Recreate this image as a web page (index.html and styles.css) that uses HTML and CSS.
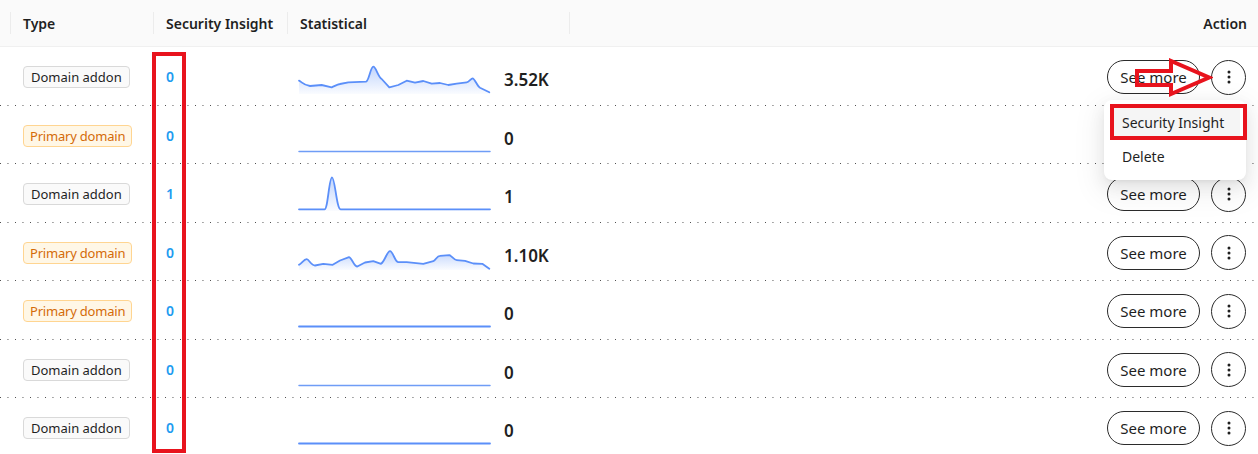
FILE: index.html
```html
<!DOCTYPE html>
<html lang="en">
<head>
<meta charset="utf-8">
<title>Domains</title>
<link rel="stylesheet" href="styles.css">
</head>
<body>
<svg class="defs" width="0" height="0" aria-hidden="true">
  <defs>
    <linearGradient id="sparkFill" x1="0" y1="0" x2="0" y2="1">
      <stop offset="0" stop-color="#5b8ff9" stop-opacity="0.38"/>
      <stop offset="1" stop-color="#5b8ff9" stop-opacity="0.03"/>
    </linearGradient>
  </defs>
</svg>
<div class="table">
  <div class="thead">
    <div class="th sep"></div>
    <div class="th sep">Type</div>
    <div class="th sep">Security Insight</div>
    <div class="th sep">Statistical</div>
    <div class="th"></div>
    <div class="th th-action">Action</div>
  </div>

  <!-- row 1 -->
  <div class="row">
    <div class="cell"></div>
    <div class="cell"><span class="tag tag-addon">Domain addon</span></div>
    <div class="cell"><span class="count">0</span></div>
    <div class="cell stat">
      <svg class="spark" width="191" height="36" viewBox="0 0 191 36">
        <path class="area" d="M0 22.7 C3 24 4 27 11 28 L22.7 27 L32.7 29.3 C36 28 38 26.5 41 26 L49.3 24.3 L67 23.7 C70 23 71.5 8.7 74.3 8.7 C77 8.7 79 19 82.7 21 L90.3 29.3 L99.3 27 L107.7 22.7 L116 24.7 L124.3 23 L132.7 25.7 L141 25 L149.3 27 L157.7 25.7 L167.7 24.3 C170 24 172 20.3 173.7 20.3 C176 21 178 28 181 29.7 L190.3 34.3 L190.3 36 L0 36 Z"/>
        <path class="line" d="M0 22.7 C3 24 4 27 11 28 L22.7 27 L32.7 29.3 C36 28 38 26.5 41 26 L49.3 24.3 L67 23.7 C70 23 71.5 8.7 74.3 8.7 C77 8.7 79 19 82.7 21 L90.3 29.3 L99.3 27 L107.7 22.7 L116 24.7 L124.3 23 L132.7 25.7 L141 25 L149.3 27 L157.7 25.7 L167.7 24.3 C170 24 172 20.3 173.7 20.3 C176 21 178 28 181 29.7 L190.3 34.3"/>
      </svg>
      <span class="value">3.52K</span>
    </div>
    <div class="cell"></div>
    <div class="cell action">
      <button class="btn-more">See more</button>
      <button class="btn-kebab" aria-label="More actions">
        <svg width="4" height="16" viewBox="0 0 4 16"><circle cx="2" cy="3" r="1.5"/><circle cx="2" cy="8" r="1.5"/><circle cx="2" cy="13" r="1.5"/></svg>
      </button>
      <svg class="mark-arrow" width="78" height="40" viewBox="0 0 78 40">
        <path d="M2 13 H36 V3 L74 19.5 L36 36 V27 H2 Z"/>
      </svg>
      <div class="menu">
        <div class="menu-item active">Security Insight</div>
        <div class="menu-item">Delete</div>
        <div class="mark-item"></div>
      </div>
    </div>
  </div>

  <!-- row 2 -->
  <div class="row">
    <div class="cell"></div>
    <div class="cell"><span class="tag tag-primary">Primary domain</span></div>
    <div class="cell"><span class="count">0</span></div>
    <div class="cell stat">
      <svg class="spark" width="191" height="36" viewBox="0 0 191 36"><path class="line thin" d="M0 34.5 H191"/></svg>
      <span class="value">0</span>
    </div>
    <div class="cell"></div>
    <div class="cell action">
      <button class="btn-more">See more</button>
      <button class="btn-kebab" aria-label="More actions">
        <svg width="4" height="16" viewBox="0 0 4 16"><circle cx="2" cy="3" r="1.5"/><circle cx="2" cy="8" r="1.5"/><circle cx="2" cy="13" r="1.5"/></svg>
      </button>
    </div>
  </div>

  <!-- row 3 -->
  <div class="row">
    <div class="cell"></div>
    <div class="cell"><span class="tag tag-addon">Domain addon</span></div>
    <div class="cell"><span class="count">1</span></div>
    <div class="cell stat">
      <svg class="spark" width="191" height="36" viewBox="0 0 191 36">
        <path class="area" d="M0 34.3 L25.5 34.3 C29 34.3 30 2.3 33 2.3 C36 2.3 37.5 34.3 41.6 34.3 L191 34.3 L191 36 L0 36 Z"/>
        <path class="line" d="M0 34.3 L25.5 34.3 C29 34.3 30 2.3 33 2.3 C36 2.3 37.5 34.3 41.6 34.3 L191 34.3"/>
      </svg>
      <span class="value">1</span>
    </div>
    <div class="cell"></div>
    <div class="cell action">
      <button class="btn-more">See more</button>
      <button class="btn-kebab" aria-label="More actions">
        <svg width="4" height="16" viewBox="0 0 4 16"><circle cx="2" cy="3" r="1.5"/><circle cx="2" cy="8" r="1.5"/><circle cx="2" cy="13" r="1.5"/></svg>
      </button>
    </div>
  </div>

  <!-- row 4 -->
  <div class="row">
    <div class="cell"></div>
    <div class="cell"><span class="tag tag-primary">Primary domain</span></div>
    <div class="cell"><span class="count">0</span></div>
    <div class="cell stat">
      <svg class="spark" width="191" height="36" viewBox="0 0 191 36">
        <path class="area" d="M0 30.8 C3 29 5 25.2 7.7 25.2 C10 25.2 12 31.5 16 31.5 L24.3 29.8 L33.7 30.8 L41 26.5 L50 23.2 C53 24 55 32.5 58.3 32.5 L66 28.5 L74.3 27.2 L82 29.8 C86 27 88 17.2 91 17.2 C94 17.2 96 28.2 99.3 28.2 L107.7 28.2 L124.3 29.8 L134.3 27.2 C137 26 138 21.8 141 21.8 L150.3 21.2 C153 22 155 26 157.7 26.2 L166 26.8 L174.3 29.5 L183.3 29.8 L190.3 34.8 L190.3 36 L0 36 Z"/>
        <path class="line" d="M0 30.8 C3 29 5 25.2 7.7 25.2 C10 25.2 12 31.5 16 31.5 L24.3 29.8 L33.7 30.8 L41 26.5 L50 23.2 C53 24 55 32.5 58.3 32.5 L66 28.5 L74.3 27.2 L82 29.8 C86 27 88 17.2 91 17.2 C94 17.2 96 28.2 99.3 28.2 L107.7 28.2 L124.3 29.8 L134.3 27.2 C137 26 138 21.8 141 21.8 L150.3 21.2 C153 22 155 26 157.7 26.2 L166 26.8 L174.3 29.5 L183.3 29.8 L190.3 34.8"/>
      </svg>
      <span class="value">1.10K</span>
    </div>
    <div class="cell"></div>
    <div class="cell action">
      <button class="btn-more">See more</button>
      <button class="btn-kebab" aria-label="More actions">
        <svg width="4" height="16" viewBox="0 0 4 16"><circle cx="2" cy="3" r="1.5"/><circle cx="2" cy="8" r="1.5"/><circle cx="2" cy="13" r="1.5"/></svg>
      </button>
    </div>
  </div>

  <!-- row 5 -->
  <div class="row">
    <div class="cell"></div>
    <div class="cell"><span class="tag tag-primary">Primary domain</span></div>
    <div class="cell"><span class="count">0</span></div>
    <div class="cell stat">
      <svg class="spark" width="191" height="36" viewBox="0 0 191 36"><path class="line" d="M0 34.5 H191"/></svg>
      <span class="value">0</span>
    </div>
    <div class="cell"></div>
    <div class="cell action">
      <button class="btn-more">See more</button>
      <button class="btn-kebab" aria-label="More actions">
        <svg width="4" height="16" viewBox="0 0 4 16"><circle cx="2" cy="3" r="1.5"/><circle cx="2" cy="8" r="1.5"/><circle cx="2" cy="13" r="1.5"/></svg>
      </button>
    </div>
  </div>

  <!-- row 6 -->
  <div class="row">
    <div class="cell"></div>
    <div class="cell"><span class="tag tag-addon">Domain addon</span></div>
    <div class="cell"><span class="count">0</span></div>
    <div class="cell stat">
      <svg class="spark" width="191" height="36" viewBox="0 0 191 36"><path class="line thin" d="M0 34.5 H191"/></svg>
      <span class="value">0</span>
    </div>
    <div class="cell"></div>
    <div class="cell action">
      <button class="btn-more">See more</button>
      <button class="btn-kebab" aria-label="More actions">
        <svg width="4" height="16" viewBox="0 0 4 16"><circle cx="2" cy="3" r="1.5"/><circle cx="2" cy="8" r="1.5"/><circle cx="2" cy="13" r="1.5"/></svg>
      </button>
    </div>
  </div>

  <!-- row 7 -->
  <div class="row">
    <div class="cell"></div>
    <div class="cell"><span class="tag tag-addon">Domain addon</span></div>
    <div class="cell"><span class="count">0</span></div>
    <div class="cell stat">
      <svg class="spark" width="191" height="36" viewBox="0 0 191 36"><path class="line" d="M0 34.5 H191"/></svg>
      <span class="value">0</span>
    </div>
    <div class="cell"></div>
    <div class="cell action">
      <button class="btn-more">See more</button>
      <button class="btn-kebab" aria-label="More actions">
        <svg width="4" height="16" viewBox="0 0 4 16"><circle cx="2" cy="3" r="1.5"/><circle cx="2" cy="8" r="1.5"/><circle cx="2" cy="13" r="1.5"/></svg>
      </button>
    </div>
  </div>

  <div class="mark-column"></div>
</div>
</body>
</html>
```

FILE: styles.css
```css
* { box-sizing: border-box; }

html, body {
  margin: 0;
  background: #ffffff;
}

body {
  font-family: "Noto Sans", "Open Sans", Arial, sans-serif;
  color: #1f1f1f;
  overflow: hidden;
}

.defs {
  display: block;
  width: 0;
  height: 0;
  overflow: hidden;
}

.table {
  position: relative;
  width: 1258px;
}

/* header */
.thead {
  display: grid;
  grid-template-columns: 11px 143px 134px 282px 1fr 200px;
  height: 47px;
  background: #fafafa;
  border-bottom: 1px solid #f0f0f0;
  align-items: center;
}

.th {
  height: 100%;
  display: flex;
  align-items: center;
  padding: 0 12px;
  font-size: 14px;
  font-weight: 600;
  color: #1f1f1f;
  white-space: nowrap;
}

.th:first-child { padding: 0; }

.th.sep {
  background: linear-gradient(#ececec, #ececec) no-repeat right center / 1px 22px;
}

.th-action {
  justify-content: flex-end;
  padding-right: 11px;
}

/* body rows */
.row {
  display: grid;
  grid-template-columns: 11px 143px 134px 282px 1fr 200px;
  height: 58.5px;
  align-items: center;
  background: linear-gradient(to right, #4a4a4a 1px, transparent 1px) repeat-x left bottom / 7.5px 1px;
}

.cell {
  height: 100%;
  display: flex;
  align-items: center;
  padding: 0 12px;
}

.cell:first-child { padding: 0; }

.tag {
  display: inline-block;
  height: 22px;
  line-height: 20px;
  padding: 0 7px;
  font-size: 13px;
  border-radius: 4px;
  border: 1px solid #d9d9d9;
  margin-top: 2px;
  white-space: nowrap;
}

.tag-addon {
  background: #fafafa;
  color: #1f1f1f;
}

.tag-primary {
  background: #fff7e6;
  border-color: #ffd591;
  color: #d46b08;
  letter-spacing: -0.2px;
  padding: 0 6px;
}

.count {
  font-size: 14px;
  font-weight: 600;
  color: #1d9bf0;
  margin-top: 1px;
}

/* statistical column */
.stat {
  padding-left: 11px;
  gap: 14px;
}

.spark {
  display: block;
  flex: none;
  overflow: visible;
}

.spark .line {
  fill: none;
  stroke: #5b8ff9;
  stroke-width: 1.8;
  stroke-linejoin: round;
  stroke-linecap: round;
}

.spark .line.thin {
  stroke: #6f9df6;
  stroke-width: 1.5;
}

.spark .area {
  fill: url(#sparkFill);
}

.value {
  font-size: 17px;
  font-weight: 600;
  color: #1f1f1f;
  margin-top: 7px;
}

/* action column */
.action {
  position: relative;
  justify-content: flex-end;
  gap: 11px;
  padding-right: 12px;
}

.btn-more {
  height: 34px;
  width: 93px;
  border: 1px solid #2b2b2b;
  border-radius: 17px;
  background: #ffffff;
  font-family: inherit;
  font-size: 15px;
  color: #1f1f1f;
  padding: 0;
  margin-top: 2px;
  cursor: pointer;
}

.btn-kebab {
  width: 35px;
  height: 35px;
  border: 1px solid #2b2b2b;
  border-radius: 50%;
  background: #ffffff;
  padding: 0;
  display: flex;
  align-items: center;
  justify-content: center;
  margin-top: 2px;
  cursor: pointer;
}

.btn-kebab svg { fill: #1f1f1f; display: block; }

/* dropdown menu opened from the first row */
.menu {
  position: absolute;
  top: 53px;
  right: 12px;
  width: 142px;
  padding: 6px;
  background: #ffffff;
  border-radius: 8px;
  box-shadow: 0 6px 16px 0 rgba(0, 0, 0, 0.08),
              0 3px 6px -4px rgba(0, 0, 0, 0.12),
              0 9px 28px 8px rgba(0, 0, 0, 0.05);
  z-index: 5;
}

.menu-item {
  height: 34px;
  line-height: 34px;
  padding: 0 12px;
  font-size: 14px;
  color: #1f1f1f;
  border-radius: 4px;
  white-space: nowrap;
}

.menu-item.active { background: #f5f5f5; }

/* red highlight marks */
.mark-item {
  position: absolute;
  left: 6px;
  top: 4px;
  width: 137px;
  height: 36px;
  border: 4px solid #e8131d;
}

.mark-arrow {
  position: absolute;
  left: 77px;
  top: 11px;
  z-index: 6;
}

.mark-arrow path {
  fill: none;
  stroke: #e8131d;
  stroke-width: 4;
  stroke-linejoin: miter;
}

.mark-column {
  position: absolute;
  left: 152px;
  top: 52px;
  width: 34px;
  height: 401px;
  border: 4px solid #e8131d;
  z-index: 4;
}
```
